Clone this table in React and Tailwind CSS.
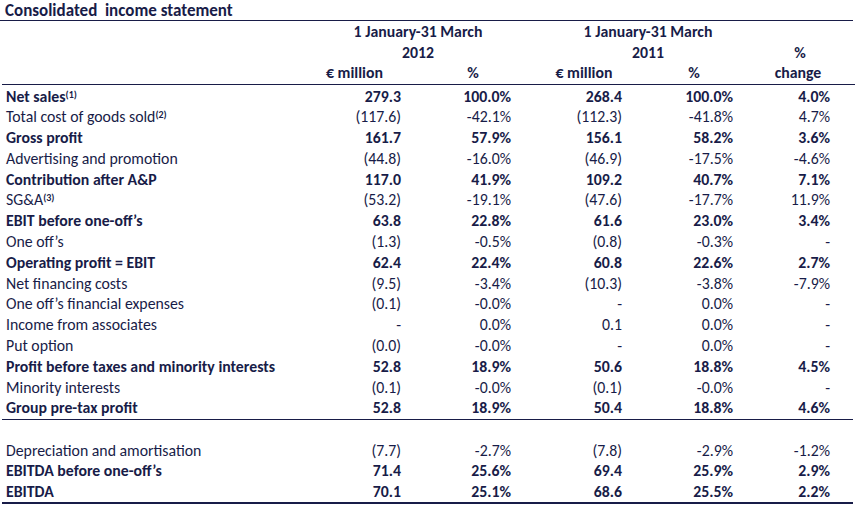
const rows = [
  { label: "Net sales", sup: "(1)", bold: true, v: ["279.3", "100.0%", "268.4", "100.0%", "4.0%"] },
  { label: "Total cost of goods sold", sup: "(2)", v: ["(117.6)", "-42.1%", "(112.3)", "-41.8%", "4.7%"] },
  { label: "Gross profit", bold: true, v: ["161.7", "57.9%", "156.1", "58.2%", "3.6%"] },
  { label: "Advertising and promotion", v: ["(44.8)", "-16.0%", "(46.9)", "-17.5%", "-4.6%"] },
  { label: "Contribution after A&P", bold: true, v: ["117.0", "41.9%", "109.2", "40.7%", "7.1%"] },
  { label: "SG&A", sup: "(3)", v: ["(53.2)", "-19.1%", "(47.6)", "-17.7%", "11.9%"] },
  { label: "EBIT before one-off’s", bold: true, v: ["63.8", "22.8%", "61.6", "23.0%", "3.4%"] },
  { label: "One off’s", v: ["(1.3)", "-0.5%", "(0.8)", "-0.3%", "-"] },
  { label: "Operating profit = EBIT", bold: true, v: ["62.4", "22.4%", "60.8", "22.6%", "2.7%"] },
  { label: "Net financing costs", v: ["(9.5)", "-3.4%", "(10.3)", "-3.8%", "-7.9%"] },
  { label: "One off’s financial expenses", v: ["(0.1)", "-0.0%", "-", "0.0%", "-"] },
  { label: "Income from associates", v: ["-", "0.0%", "0.1", "0.0%", "-"] },
  { label: "Put option", v: ["(0.0)", "-0.0%", "-", "0.0%", "-"] },
  { label: "Profit before taxes and minority interests", bold: true, v: ["52.8", "18.9%", "50.6", "18.8%", "4.5%"] },
  { label: "Minority interests", v: ["(0.1)", "-0.0%", "(0.1)", "-0.0%", "-"] },
  { label: "Group pre-tax profit", bold: true, v: ["52.8", "18.9%", "50.4", "18.8%", "4.6%"] },
];

const ebitda = [
  { label: "Depreciation and amortisation", v: ["(7.7)", "-2.7%", "(7.8)", "-2.9%", "-1.2%"] },
  { label: "EBITDA before one-off’s", bold: true, v: ["71.4", "25.6%", "69.4", "25.9%", "2.9%"] },
  { label: "EBITDA", bold: true, v: ["70.1", "25.1%", "68.6", "25.5%", "2.2%"] },
];

const cols = "grid grid-cols-[306px_93px_110px_111px_111px_97px] items-center";

function Row({ row }) {
  return (
    <div className={`${cols} h-[20.8px] ${row.bold ? "font-bold" : ""}`}>
      <div className="pl-[4px] whitespace-nowrap">
        {row.label}
        {row.sup && <span className="relative top-[-4px] text-[10px] font-semibold">{row.sup}</span>}
      </div>
      {row.v.map((x, i) => (
        <div key={i} className="text-right">{x}</div>
      ))}
    </div>
  );
}

export default function App() {
  return (
    <div
      className="w-[858px] bg-white text-[#181c48] text-[15.8px] leading-none"
      style={{ fontFamily: "Carlito, Calibri, Lato, 'Noto Sans', sans-serif" }}
    >
      <div className="h-[21px] flex items-center pl-[5px] font-bold text-[17px] whitespace-pre border-b border-[#181c48] w-[853px]">
        Consolidated  income statement
      </div>

      {/* Header */}
      <div className="h-[64px] flex flex-col justify-around border-b border-[#181c48] w-[853px] ml-[2px] font-bold">
        <div className={`${cols} h-[21px]`}>
          <div />
          <div className="col-span-2 text-center pl-[17px]">1 January-31 March</div>
          <div className="col-span-2 text-center pl-[52px]">1 January-31 March</div>
          <div />
        </div>
        <div className={`${cols} h-[20px]`}>
          <div />
          <div className="col-span-2 text-center pl-[17px]">2012</div>
          <div className="col-span-2 text-center pl-[52px]">2011</div>
          <div className="text-center pl-[37px]">%</div>
        </div>
        <div className={`${cols} h-[21px]`}>
          <div />
          <div className="text-center">€ million</div>
          <div className="text-center pl-[34px]">%</div>
          <div className="text-center pl-[35px]">€ million</div>
          <div className="text-center pl-[33px]">%</div>
          <div className="text-center pl-[33px]">change</div>
        </div>
      </div>

      <div className="h-[335px] pt-[1px] border-b border-[#181c48] w-[851px] ml-[2px]">
        {rows.map((r) => (
          <Row key={r.label} row={r} />
        ))}
      </div>

      <div className="pt-[20px] w-[851px] ml-[2px]">
        {ebitda.map((r) => (
          <Row key={r.label} row={r} />
        ))}
      </div>
      <div className="h-[2px] w-[851px] ml-[2px] bg-[#181c48]" />
      <div className="h-[6px]" />
    </div>
  );
}
